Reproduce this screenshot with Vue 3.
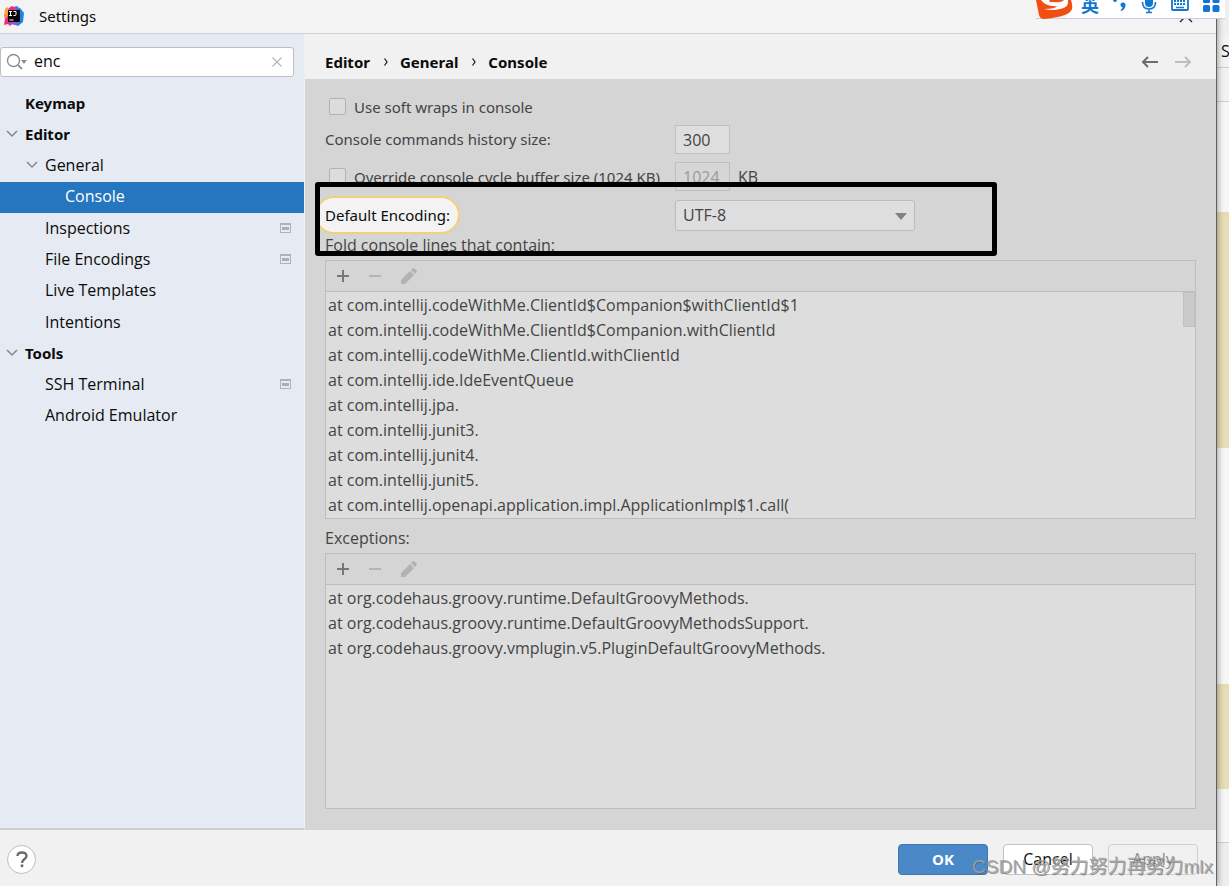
<script setup>
import { ref } from 'vue'

const query = ref('enc')
const tree = [
  { label: 'Keymap', level: 0, bold: true },
  { label: 'Editor', level: 0, bold: true, open: true },
  { label: 'General', level: 1, open: true },
  { label: 'Console', level: 2, active: true },
  { label: 'Inspections', level: 1, badge: true },
  { label: 'File Encodings', level: 1, badge: true },
  { label: 'Live Templates', level: 1 },
  { label: 'Intentions', level: 1 },
  { label: 'Tools', level: 0, bold: true, open: true },
  { label: 'SSH Terminal', level: 1, badge: true },
  { label: 'Android Emulator', level: 1 },
]
const panels = [
  {
    title: 'Fold console lines that contain:',
    scroll: true,
    lines: [
      'at com.intellij.codeWithMe.ClientId$Companion$withClientId$1',
      'at com.intellij.codeWithMe.ClientId$Companion.withClientId',
      'at com.intellij.codeWithMe.ClientId.withClientId',
      'at com.intellij.ide.IdeEventQueue',
      'at com.intellij.jpa.',
      'at com.intellij.junit3.',
      'at com.intellij.junit4.',
      'at com.intellij.junit5.',
      'at com.intellij.openapi.application.impl.ApplicationImpl$1.call(',
    ],
  },
  {
    title: 'Exceptions:',
    scroll: false,
    lines: [
      'at org.codehaus.groovy.runtime.DefaultGroovyMethods.',
      'at org.codehaus.groovy.runtime.DefaultGroovyMethodsSupport.',
      'at org.codehaus.groovy.vmplugin.v5.PluginDefaultGroovyMethods.',
    ],
  },
]
</script>

<template>
  <div class="screen">
    <div class="window">
      <header class="titlebar">
        <svg class="logo" width="20" height="20" viewBox="0 0 20 20" aria-hidden="true">
          <path d="M1 3l2-2 6 4-4 8-5-3z" fill="#f9a24a" />
          <path d="M5 2l3-2 5 3-3 6-6-1z" fill="#ec2f74" />
          <path d="M9 1l4-1 3 4-4 3z" fill="#c43fb0" />
          <path d="M12 1l4 1 4 5-1 9-5 4-5-2 3-9z" fill="#1a86ea" />
          <path d="M0 9l5-2 1 4-5 3z" fill="#f58a3c" />
          <path d="M1 13l4-4 4 8-3 3-2-2-4 1z" fill="#ea2e7c" />
          <path d="M6 15l9 1-3 3-6-1z" fill="#8a58d6" />
          <rect x="4" y="4" width="12" height="12" fill="#0a0508" />
          <path d="M5 5.500h3M6.500 5.500v4M5 9.500h3M9.500 5.500H12v3q0 1-1 1H9.500M5.500 14h4" stroke="#fff" fill="none" />
        </svg>
        <span>Settings</span>
        <button class="close" aria-label="Close">
          <svg width="14" height="14" viewBox="0 0 14 14"><path d="M1 1l12 12M13 1L1 13" stroke="#222" stroke-width="1.300" /></svg>
        </button>
      </header>

      <div class="body">
        <aside class="sidebar">
          <label class="search">
            <svg width="22" height="18" viewBox="0 0 22 18" aria-hidden="true">
              <circle cx="7.500" cy="7.500" r="6" fill="none" stroke="#8a8f95" stroke-width="1.400" />
              <path d="M12 12l4 4" stroke="#8a8f95" stroke-width="1.800" />
              <path d="M15 7h6l-3 4z" fill="#8a8f95" />
            </svg>
            <input v-model="query" type="text" aria-label="Search settings" />
            <button aria-label="Clear search" @click="query = ''">
              <svg width="10" height="10" viewBox="0 0 10 10"><path d="M.5.5l9 9M9.500.5l-9 9" stroke="#b4b8bc" stroke-width="1.200" /></svg>
            </button>
          </label>
          <nav class="tree">
            <a
              v-for="n in tree"
              :key="n.label"
              href="#"
              :class="['node', 'level-' + n.level, { bold: n.bold, active: n.active }]"
            >
              <span class="twisty">
                <svg v-if="n.open" width="12" height="8" viewBox="0 0 12 8"><path d="M1 1l5 5 5-5" fill="none" stroke="#85888c" stroke-width="1.500" /></svg>
              </span>
              <span class="name">{{ n.label }}</span>
              <svg v-if="n.badge" class="badge" width="11" height="10" viewBox="0 0 11 10">
                <path d="M0 0h11v10H0zM1 2v7h9V2z" fill="#adb3b8" fill-rule="evenodd" />
                <rect x="2" y="4" width="7" height="3" fill="#a9afb4" />
              </svg>
            </a>
          </nav>
        </aside>

        <main class="main">
          <div class="crumbs">
            <h1>
              Editor
              <svg width="6" height="8" viewBox="-2 0 6 8"><path d="M.5.5L3 4 .5 7.500" fill="none" stroke="#111" stroke-width="1.200" /></svg>
              General
              <svg width="6" height="8" viewBox="-2 0 6 8"><path d="M.5.5L3 4 .5 7.500" fill="none" stroke="#111" stroke-width="1.200" /></svg>
              Console
            </h1>
            <button aria-label="Back">
              <svg width="17" height="12" viewBox="0 0 17 12"><path d="M17 6H2M7 1L2 6l5 5" fill="none" stroke="#6c6c6c" stroke-width="2" /></svg>
            </button>
            <button aria-label="Forward" disabled>
              <svg width="17" height="12" viewBox="0 0 17 12"><path d="M0 6h15M10 1l5 5-5 5" fill="none" stroke="#bdbdbd" stroke-width="2" /></svg>
            </button>
          </div>

          <div class="content">
            <div class="row">
              <label class="check"><input type="checkbox" />Use soft wraps in console</label>
            </div>
            <div class="row">
              <label class="caption raised" for="history">Console commands history size:</label>
              <input id="history" class="field" type="text" value="300" />
            </div>
            <div class="row">
              <label class="check caption"><input type="checkbox" />Override console cycle buffer size (1024 KB)</label>
              <input class="field off" type="text" value="1024" aria-label="Buffer size" disabled />
              <span class="unit">KB</span>
            </div>
            <div class="row tall">
              <div class="caption"><label class="found" for="encoding">Default Encoding:</label></div>
              <div class="combo">
                <select id="encoding"><option>UTF-8</option></select>
                <svg width="12" height="7" viewBox="0 0 12 7" aria-hidden="true"><path d="M0 0h12L6 7z" fill="#818181" /></svg>
              </div>
            </div>

            <section v-for="p in panels" :key="p.title" class="group">
              <h2>{{ p.title }}</h2>
              <div class="panel">
                <div class="tools">
                  <button aria-label="Add">
                    <svg width="14" height="14" viewBox="0 0 14 14"><path d="M7 1v12M1 7h12" stroke="#777" stroke-width="2" /></svg>
                  </button>
                  <button aria-label="Remove" disabled>
                    <svg width="14" height="14" viewBox="0 0 14 14"><path d="M1 7h12" stroke="#b4b4b4" stroke-width="2" /></svg>
                  </button>
                  <button aria-label="Edit" disabled>
                    <svg width="18" height="18" viewBox="0 0 18 18"><path d="M1 17v-4l9-9 4 4-9 9zM11 3l1.500-1.500q1-1 2 0l2 2q1 1 0 2L15 7z" fill="#b2b2b2" /></svg>
                  </button>
                </div>
                <ul class="lines">
                  <li v-for="l in p.lines" :key="l">{{ l }}</li>
                </ul>
                <div v-if="p.scroll" class="thumb"></div>
              </div>
            </section>
            <div class="marker"></div>
          </div>
        </main>
      </div>

      <footer class="footer">
        <button class="help" aria-label="Help">
          <svg width="12" height="17" viewBox="0 0 12 17"><path d="M1.500 5Q1.500 1.500 6 1.500T10.500 5C10.500 8 6 8 6 12" fill="none" stroke="#6b6b6b" stroke-width="2.400" /><rect x="4.700" y="13.500" width="2.600" height="2.600" fill="#6b6b6b" /></svg>
        </button>
        <span class="spacer"></span>
        <button class="btn primary">OK</button>
        <button class="btn">Cancel</button>
        <button class="btn ghost" disabled>Apply</button>
      </footer>
    </div>

    <div class="backdrop">
      <i class="pane tabs"></i>
      <i class="pane word">S</i>
      <i class="pane bar"></i>
      <i class="pane gap-a"></i>
      <i class="pane hit-a"></i>
      <i class="pane gap-b"></i>
      <i class="pane hit-b"></i>
      <i class="pane gap-c"></i>
      <i class="pane foot"></i>
    </div>

    <div class="ime">
      <svg class="ime-logo" width="38" height="20" viewBox="0 0 38 20" aria-hidden="true">
        <path d="M0 0h35q3 9-1 12-5 5-26 7-4 0-5-4z" fill="#f04e12" />
        <path d="M5 0h9q-3 2 3 2 8 1 11-2h4q1 8-8 9-8 2-16 0 12 0 13-3-11 1-16-6z" fill="#fff" />
      </svg>
      <span class="ime-lang">英</span>
      <svg width="14" height="14" viewBox="0 0 14 14"><circle cx="2" cy="0" r="2" fill="#1277d3" /><path d="M7.500 5a2.500 2.500 0 1 1 5 0q0 4-4 6l-1-1q2-1 2-3-2 0-2-2z" fill="#1277d3" /></svg>
      <svg width="16" height="15" viewBox="0 0 16 15"><path d="M4 0h8v3a4 4 0 0 1-8 0z" fill="#1277d3" /><path d="M1.500 2q0 7 6.500 7t6.500-7M8 9v4M5 12.500h6" fill="none" stroke="#1277d3" stroke-width="1.600" /></svg>
      <svg width="18" height="12" viewBox="0 0 18 12"><path d="M1 0v9q0 1 1 1h14q1 0 1-1V0" fill="none" stroke="#1277d3" stroke-width="1.800" /><path d="M3 1h12M3 4h12" stroke="#1277d3" stroke-width="2" stroke-dasharray="2 1" /><path d="M5 7.500h8" stroke="#1277d3" stroke-width="1.500" /></svg>
      <svg width="17" height="13" viewBox="0 0 17 13"><path d="M0 0h7v2q0 1-1 1H1Q0 3 0 2zM9.500 0h7v2q0 1-1 1h-5q-1 0-1-1z" fill="#1277d3" /><rect y="5" width="7" height="7" rx="1.500" fill="#1277d3" /><rect x="9.500" y="5" width="7" height="7" rx="1.500" fill="#1277d3" /></svg>
    </div>
    <div class="credit">CSDN @努力努力再努力mlx</div>
  </div>
</template>

<style>
body { margin: 0; }
</style>

<style scoped>
* { box-sizing: border-box; }
button, input, select { font: inherit; color: inherit; }
button { border: 0; padding: 0; background: none; display: flex; align-items: center; justify-content: center; }
svg { display: block; flex: none; }
.screen {
  position: relative; display: flex; min-height: 100vh; overflow: hidden;
  font: 16px/24px "Open Sans", "Noto Sans", "Noto Sans CJK SC", sans-serif; color: #0b0b0b; background: #f2f2f2;
}
.window {
  position: relative; z-index: 1; flex: 1; min-width: 0; display: flex; flex-direction: column;
  border-right: 1px solid #5f6163; background: #f1f1f1; box-shadow: 1px 0 6px rgba(0, 0, 0, 0.35);
}
.titlebar { height: 34px; display: flex; align-items: center; border-bottom: 1px solid #cfd1d6; padding: 0 23px 2px 4px; gap: 15px; background: #f3f3f3; font-family: "Noto Sans", sans-serif; font-size: 15px; }
.close { margin-left: auto; }
.body { flex: 1; display: flex; }
.sidebar { width: 305px; background: #e6eaf2; border-right: 1px solid #efefef; border-bottom: 2px solid #cecece; padding-top: 13px; }
.search { display: flex; align-items: center; width: 294px; height: 30px; border: 1px solid #bcc0c5; border-radius: 3px; background: #fff; padding: 0 11px 0 5px; }
.search input { flex: 1; min-width: 0; border: 0; outline: 0; background: none; padding: 0 6px 2px; }
.tree { display: grid; grid-auto-rows: 1fr; height: 344px; margin-top: 11px; }
.node { display: flex; align-items: center; color: inherit; text-decoration: none; padding: 0 13px 2px 6px; }
.level-1 { padding-left: 26px; }
.level-2 { padding-left: 46px; }
.twisty { width: 19px; }
.name { flex: 1; }
.bold { font-family: "Noto Sans", sans-serif; font-size: 15px; font-weight: 700; }
.active { background: #2675bf; color: #fff; }
.main { flex: 1; min-width: 0; display: flex; flex-direction: column; }
.crumbs { display: flex; align-items: center; gap: 17px; height: 45px; padding: 10px 24px 0 20px; }
.crumbs h1 { flex: 1; display: flex; align-items: center; gap: 12px; margin: 0; font-family: "Noto Sans", sans-serif; font-size: 15px; font-weight: 700; }
.content { position: relative; flex: 1; display: flex; flex-direction: column; padding: 13px 20px 21px; background: #d5d5d5; color: #444; }
.row { display: flex; align-items: center; height: 37px; }
.row:first-child { height: 29px; }
.row.tall { height: 40px; }
.row label { font-family: "Noto Sans", sans-serif; font-size: 15px; }
.caption { width: 350px; white-space: nowrap; }
.raised { padding-bottom: 2px; }
.check { display: flex; align-items: center; gap: 8px; }
.check input { appearance: none; flex: none; width: 17px; height: 17px; margin: 0 0 0 4px; border: 1px solid #b2b2b2; border-radius: 2px; background: #dcdcdc; }
.field { width: 55px; height: 29px; border: 1px solid #bfbfbf; background: #dedede; padding: 0 7px; outline: 0; }
.off { background: #d6d6d6; color: #9b9b9b; }
.unit { margin-left: 8px; }
.found { display: inline-block; margin-left: -10px; padding: 5px 8px; border: 2px solid #f0d07c; border-radius: 20px; background: #f3f3f3; color: #0b0b0b; }
.combo { position: relative; width: 240px; }
.combo select { appearance: none; display: block; width: 100%; height: 31px; border: 1px solid #bcbcbc; border-radius: 3px; background: #dedede; padding: 0 7px; outline: 0; }
.combo svg { position: absolute; right: 8px; top: 13px; pointer-events: none; }
.group { display: contents; }
.group h2 { margin: 0; font-size: 16px; line-height: 20px; font-weight: 400; height: 25px; }
.group + .group h2 { height: 34px; padding-top: 9px; }
.panel { position: relative; flex: 1 0 0; border: 1px solid #bebebe; background: #dddddd; }
.tools { display: flex; align-items: center; height: 31px; gap: 18px; padding-left: 10px; border-bottom: 1px solid #bebebe; background: #d5d5d5; }
.lines { list-style: none; margin: 0; padding: 1px 2px 0; line-height: 25px; }
.thumb { position: absolute; right: 0; top: 31px; width: 12px; height: 35px; background: #cacaca; border: 1px solid #c0c0c0; }
.marker { position: absolute; left: 10px; top: 103px; width: 682px; height: 74px; border: 5px solid #000; border-radius: 3px; pointer-events: none; }
.footer { display: flex; align-items: center; gap: 15px; height: 56px; padding: 2px 18px 0 7px; background: #f1f1f1; }
.help { width: 29px; height: 29px; border: 1px solid #bdbdbd; border-radius: 50%; background: #fff; }
.spacer { flex: 1; }
.btn { width: 90px; height: 31px; border: 1px solid #c3c3c3; border-radius: 4px; background: #fff; }
.primary { background: #4a88c8; border-color: #3d76b2; color: #fff; font-size: 15px; font-weight: 700; }
.ghost { background: #f1f1f1; border-color: #cfcfcf; color: #8c8c8c; }
.backdrop { width: 12px; display: flex; flex-direction: column; background: #f6f6f6; }
.pane { display: block; font-style: normal; overflow: hidden; }
.tabs { height: 34px; background: #efefef; }
.word { height: 34px; border-bottom: 1px solid #cdcdcd; background: #f2f2f2; padding: 5px 0 0 4px; }
.bar { height: 34px; border-bottom: 1px solid #cdcdcd; background: #f2f2f2; }
.gap-a { height: 110px; }
.hit-a { height: 236px; background: #e8dcb4; }
.gap-b { height: 236px; }
.hit-b { height: 105px; background: #e8dcb4; }
.gap-c { height: 54px; border-bottom: 1px solid #cdcdcd; }
.foot { flex: 1; background: #eeeeee; }
.ime { position: absolute; z-index: 2; top: 0; right: 4px; display: flex; align-items: flex-start; gap: 14px; height: 19px; padding-right: 5px; background: linear-gradient(90deg, transparent 30px, #fff 30px); border-bottom: 1px solid #c3cfe4; }
.ime-logo { margin-right: -7px; }
.ime-lang { width: 18px; font: 700 18px/8px "Noto Sans CJK SC", sans-serif; color: #1277d3; }
.credit { position: absolute; z-index: 2; right: 16px; bottom: 5px; font: 19px/28px "Liberation Sans", "Noto Sans CJK SC", sans-serif; color: rgba(165, 165, 165, 0.85); text-shadow: 1px 1px 0 rgba(90, 90, 90, 0.6); white-space: nowrap; pointer-events: none; }
</style>
